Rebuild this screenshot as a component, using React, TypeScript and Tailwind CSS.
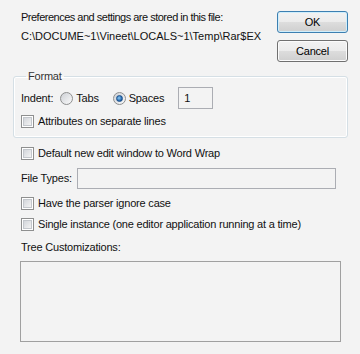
import React from 'react';

const font = { fontFamily: '"Liberation Sans", Arial, sans-serif' };

function Checkbox({ label }: { label: string }) {
  return (
    <label className="flex items-center h-[13px] ml-[21px] leading-[13px]">
      <span className="w-[13px] h-[13px] border border-[#8e8f8f] bg-white p-[1px] shrink-0">
        <span className="block w-full h-full border border-[#c3c7cc] bg-gradient-to-br from-[#d3d6db] to-[#f3f3f3]" />
      </span>
      <span className="ml-[4px] whitespace-nowrap">{label}</span>
    </label>
  );
}

function Radio({ checked }: { checked?: boolean }) {
  return (
    <span className="w-[13px] h-[13px] rounded-full border border-[#8e8f8f] bg-gradient-to-br from-[#cdd0d5] to-[#fbfbfb] flex items-center justify-center shrink-0">
      {checked && (
        <span className="w-[7px] h-[7px] rounded-full bg-[radial-gradient(circle_at_40%_40%,#8ccaf5,#1d5fa6_70%)] border border-[#1b4f8a]" />
      )}
    </span>
  );
}

function Button({ children, primary }: { children: React.ReactNode; primary?: boolean }) {
  return (
    <button
      className={
        primary
          ? 'w-[71px] h-[22px] rounded-[3px] border border-[#3c7fb1] shadow-[inset_0_0_0_1px_#cfeefc] bg-[linear-gradient(#f2f2f2_0%,#ebebeb_50%,#dddddd_50%,#cfcfcf_100%)] text-[11px] leading-none text-black'
          : 'w-[71px] h-[22px] rounded-[3px] border border-[#707070] shadow-[inset_0_0_0_1px_#fbfbfb] bg-[linear-gradient(#f2f2f2_0%,#ebebeb_50%,#dddddd_50%,#cfcfcf_100%)] text-[11px] leading-none text-black'
      }
    >
      {children}
    </button>
  );
}

export default function App() {
  return (
    <div className="w-[360px] h-[354px] bg-[#f3f3f3] text-[#111] text-[11px] tracking-[-0.2px] overflow-hidden" style={font}>
      {/* header */}
      <div className="flex">
        <div className="pt-[8px] pl-[21px] leading-[19px] w-[262px] overflow-hidden whitespace-nowrap">
          <div className="tracking-[-0.5px]">Preferences and settings are stored in this file:</div>
          <div className="tracking-normal">C:\DOCUME~1\Vineet\LOCALS~1\Temp\Rar$EX</div>
        </div>
        <div className="ml-auto mr-[12px] pt-[11px] flex flex-col gap-[7px]">
          <Button primary>OK</Button>
          <Button>Cancel</Button>
        </div>
      </div>

      {/* Format group */}
      <fieldset className="mr-[12px] ml-[13px] mt-[8px] border border-[#d5dfe5] rounded-[3px] shadow-[inset_0_0_0_1px_#ffffff] px-[7px] pb-[9px]">
        <legend className="ml-[5px] px-[2px] leading-[13px] text-[#333]">Format</legend>
        <div className="flex items-center h-[22px] mt-[4px]">
          <span>Indent:</span>
          <span className="ml-[7px]"><Radio /></span>
          <span className="ml-[3px]">Tabs</span>
          <span className="ml-[14px]"><Radio checked /></span>
          <span className="ml-[3px]">Spaces</span>
          <div className="ml-[14px] w-[35px] h-[22px] border border-[#abadb3] px-[5px] flex items-center">1</div>
        </div>
        <div className="mt-[6px] -ml-[21px]">
          <Checkbox label="Attributes on separate lines" />
        </div>
      </fieldset>

      <div className="mt-[9px]">
        <Checkbox label="Default new edit window to Word Wrap" />
      </div>

      <div className="flex items-center mt-[8px] h-[21px] pl-[21px]">
        <span className="w-[56px]">File Types:</span>
        <div className="w-[259px] h-[21px] border border-[#abadb3]" />
      </div>

      <div className="mt-[8px]">
        <Checkbox label="Have the parser ignore case" />
      </div>
      <div className="mt-[8px]">
        <Checkbox label="Single instance (one editor application running at a time)" />
      </div>

      <div className="mt-[10px] pl-[21px] leading-[13px]">Tree Customizations:</div>
      <div className="mt-[7px] ml-[20px] w-[321px] h-[81px] border border-[#a0a0a0]" />
    </div>
  );
}
